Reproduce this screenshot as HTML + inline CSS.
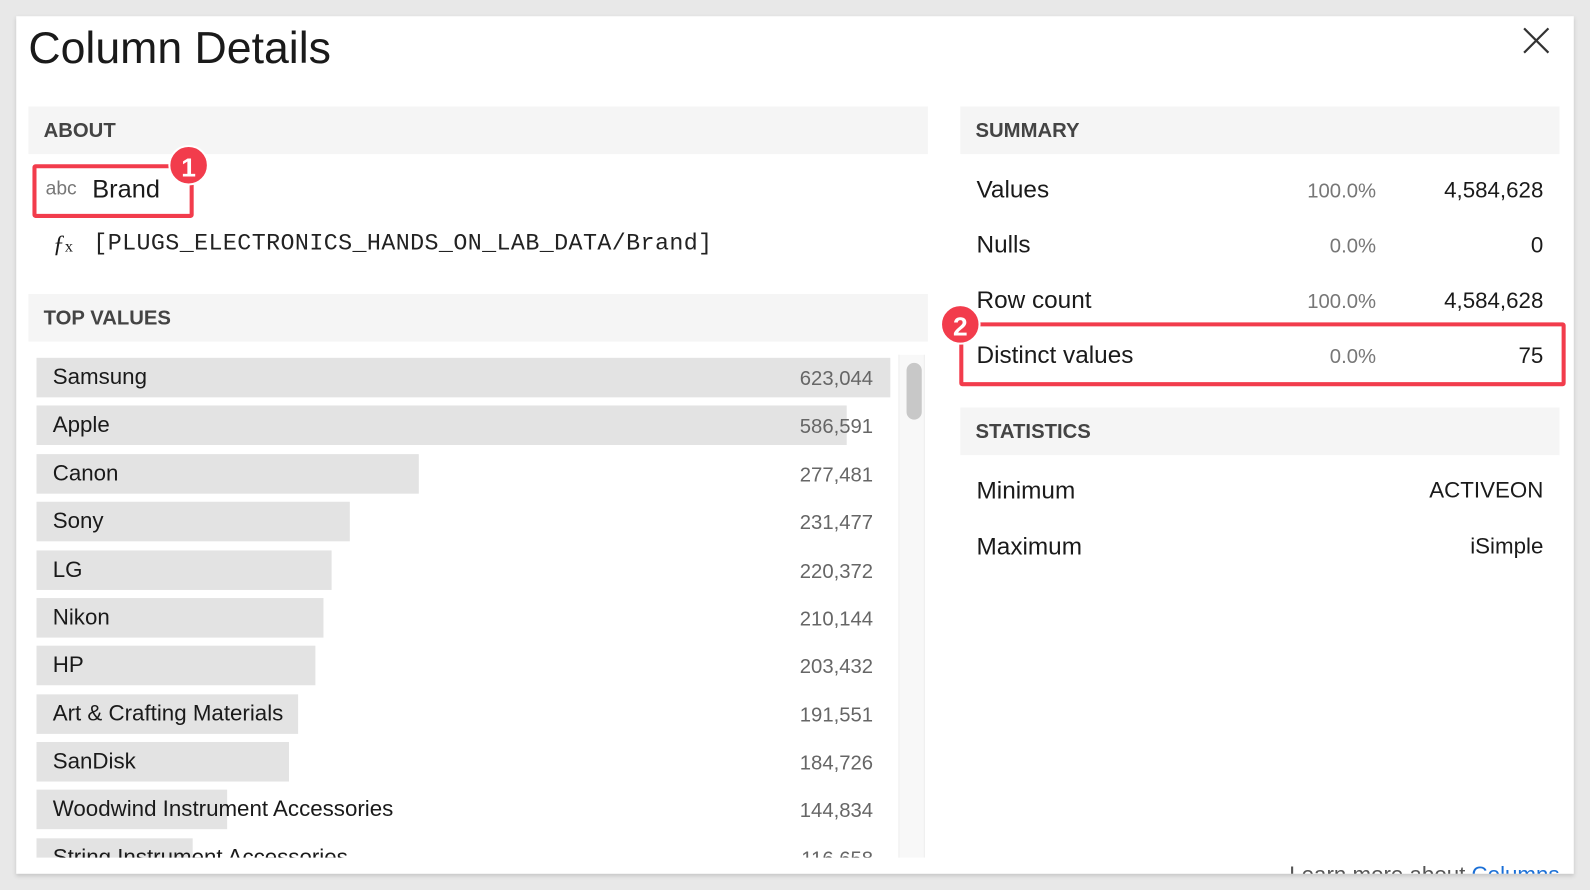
<!DOCTYPE html>
<html><head><meta charset="utf-8"><style>
*{margin:0;padding:0;box-sizing:border-box}
html,body{width:1590px;height:890px;overflow:hidden;background:#e8e8e8;font-family:"Liberation Sans",sans-serif;color:#1a1a1a}
#w{position:absolute;left:0;top:0;width:1568px;height:878px;transform:scale(1.01403,1.01367);transform-origin:0 0}
.card{position:absolute;left:16px;top:16px;width:1536px;height:846px;background:#fff;box-shadow:0 2px 4px rgba(0,0,0,.15);overflow:hidden}
.a{position:absolute}
.bar{position:absolute;background:#f5f5f5;height:47px;font-weight:bold;font-size:20px;color:#444;padding-left:15px;line-height:49px}
.row{position:absolute;left:20px;height:39px;background:#e3e3e3}
.lab{position:absolute;left:36px;font-size:22px;color:#1a1a1a}
.num{position:absolute;right:25px;font-size:20px;color:#666;text-align:right}
.sl{position:absolute;left:947px;font-size:24px}
.sp{position:absolute;right:195px;font-size:20px;color:#777}
.sv{position:absolute;right:30px;font-size:22px}
.badge{position:absolute;width:40px;height:40px;border-radius:50%;background:#f23c4c;color:#fff;font-weight:bold;font-size:26px;text-align:center;line-height:40px;border:2px solid #fff}
.rb{position:absolute;border:4px solid #f23c4c;border-radius:3px}
</style></head><body><div id="w">
<div class="card">
<div class="a" style="left:12px;top:7px;font-size:44px;color:#1a1a1a">Column Details</div>
<svg class="a" style="left:1486px;top:11px" width="26" height="26"><path d="M1 1L25 25M25 1L1 25" stroke="#333" stroke-width="2.2"/></svg>

<div class="bar" style="left:12px;top:89px;width:887px">ABOUT</div>
<div class="a" style="left:29px;top:160px;font-size:19px;color:#777">abc</div>
<div class="a" style="left:75px;top:157px;font-size:25px">Brand</div>
<div class="a" style="left:36px;top:212px;font-size:24px;font-style:italic;font-family:'Liberation Serif',serif">ƒ<span style="font-size:16px;font-style:normal">x</span></div>
<div class="a" style="left:76px;top:211px;font-size:23px;letter-spacing:0.4px;font-family:'Liberation Mono',monospace;color:#222">[PLUGS_ELECTRONICS_HANDS_ON_LAB_DATA/Brand]</div>

<div class="bar" style="left:12px;top:274px;width:887px">TOP VALUES</div>
<div class="a" style="left:0;top:334px;width:870px;height:496px;overflow:hidden">
<div class="row" style="top:3px;width:842px"></div><div class="lab" style="top:9px">Samsung</div><div class="num" style="top:13px">623,044</div>
<div class="row" style="top:50px;width:799px"></div><div class="lab" style="top:56px">Apple</div><div class="num" style="top:60px">586,591</div>
<div class="row" style="top:98px;width:377px"></div><div class="lab" style="top:104px">Canon</div><div class="num" style="top:108px">277,481</div>
<div class="row" style="top:145px;width:309px"></div><div class="lab" style="top:151px">Sony</div><div class="num" style="top:155px">231,477</div>
<div class="row" style="top:193px;width:291px"></div><div class="lab" style="top:199px">LG</div><div class="num" style="top:203px">220,372</div>
<div class="row" style="top:240px;width:283px"></div><div class="lab" style="top:246px">Nikon</div><div class="num" style="top:250px">210,144</div>
<div class="row" style="top:287px;width:275px"></div><div class="lab" style="top:293px">HP</div><div class="num" style="top:297px">203,432</div>
<div class="row" style="top:335px;width:258px"></div><div class="lab" style="top:341px">Art &amp; Crafting Materials</div><div class="num" style="top:345px">191,551</div>
<div class="row" style="top:382px;width:249px"></div><div class="lab" style="top:388px">SanDisk</div><div class="num" style="top:392px">184,726</div>
<div class="row" style="top:429px;width:188px"></div><div class="lab" style="top:435px">Woodwind Instrument Accessories</div><div class="num" style="top:439px">144,834</div>
<div class="row" style="top:477px;width:154px"></div><div class="lab" style="top:483px">String Instrument Accessories</div><div class="num" style="top:487px">116,658</div>
</div>
<div class="a" style="left:870px;top:334px;width:26px;height:496px;background:#f8f8f8;border-left:1px solid #eee;border-right:1px solid #eee"></div>
<div class="a" style="left:878px;top:342px;width:15px;height:56px;background:#c8c8c8;border-radius:8px"></div>

<div class="bar" style="left:931px;top:89px;width:591px">SUMMARY</div>
<div class="sl" style="top:158px">Values</div><div class="sp" style="top:162px">100.0%</div><div class="sv" style="top:159px">4,584,628</div>
<div class="sl" style="top:212px">Nulls</div><div class="sp" style="top:216px">0.0%</div><div class="sv" style="top:213px">0</div>
<div class="sl" style="top:267px">Row count</div><div class="sp" style="top:271px">100.0%</div><div class="sv" style="top:268px">4,584,628</div>
<div class="sl" style="top:321px">Distinct values</div><div class="sp" style="top:325px">0.0%</div><div class="sv" style="top:322px">75</div>
<div class="bar" style="left:931px;top:386px;width:591px">STATISTICS</div>
<div class="sl" style="top:455px">Minimum</div><div class="sv" style="top:455px">ACTIVEON</div>
<div class="sl" style="top:510px">Maximum</div><div class="sv" style="top:510px">iSimple</div>
<div class="a" style="right:14px;top:834px;font-size:22px;color:#555">Learn more about <span style="color:#1a6fd6">Columns</span></div>
</div>
<div class="rb" style="left:32px;top:162px;width:159px;height:53px"></div>
<div class="badge" style="left:166px;top:143px">1</div>
<div class="rb" style="left:946px;top:318px;width:598px;height:63px"></div>
<div class="badge" style="left:927px;top:300px">2</div>
</div></body></html>
